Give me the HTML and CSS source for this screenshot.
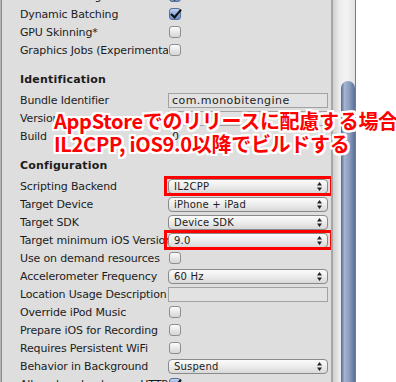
FILE: index.html
```html
<!DOCTYPE html>
<html lang="ja">
<head>
	<meta charset="UTF-8">
	<title>Player Settings - iOS</title>
	<link rel="stylesheet" href="styles.css">
</head>
<body>
	<div class="window">
		<div class="inspector">
			<div class="rows">
				<div class="row"><span class="label">Static Batching</span><span class="check on"></span></div>
				<div class="row"><span class="label">Dynamic Batching</span><span class="check on"></span></div>
				<div class="row"><span class="label">GPU Skinning*</span><span class="check"></span></div>
				<div class="row"><span class="label">Graphics Jobs (Experimental)</span><span class="check"></span></div>

				<div class="section">Identification</div>
				<div class="row"><span class="label">Bundle Identifier</span><span class="field">com.monobitengine</span></div>
				<div class="row"><span class="label">Version*</span><span class="field"></span></div>
				<div class="row"><span class="label">Build</span><span class="field plain">0</span></div>

				<div class="section">Configuration</div>
				<div class="row"><span class="label">Scripting Backend</span><span class="popup marked">IL2CPP<svg class="arrows" width="5" height="9" viewBox="0 0 5 9"><path d="M2.5 0L5 3.5H0zM2.5 9L5 5.5H0z"/></svg></span></div>
				<div class="row"><span class="label">Target Device</span><span class="popup">iPhone + iPad<svg class="arrows" width="5" height="9" viewBox="0 0 5 9"><path d="M2.5 0L5 3.5H0zM2.5 9L5 5.5H0z"/></svg></span></div>
				<div class="row"><span class="label">Target SDK</span><span class="popup">Device SDK<svg class="arrows" width="5" height="9" viewBox="0 0 5 9"><path d="M2.5 0L5 3.5H0zM2.5 9L5 5.5H0z"/></svg></span></div>
				<div class="row"><span class="label">Target minimum iOS Version</span><span class="popup marked">9.0<svg class="arrows" width="5" height="9" viewBox="0 0 5 9"><path d="M2.5 0L5 3.5H0zM2.5 9L5 5.5H0z"/></svg></span></div>
				<div class="row"><span class="label">Use on demand resources</span><span class="check"></span></div>
				<div class="row"><span class="label">Accelerometer Frequency</span><span class="popup">60 Hz<svg class="arrows" width="5" height="9" viewBox="0 0 5 9"><path d="M2.5 0L5 3.5H0zM2.5 9L5 5.5H0z"/></svg></span></div>
				<div class="row"><span class="label">Location Usage Description</span><span class="field"></span></div>
				<div class="row"><span class="label">Override iPod Music</span><span class="check"></span></div>
				<div class="row"><span class="label">Prepare iOS for Recording</span><span class="check"></span></div>
				<div class="row"><span class="label">Requires Persistent WiFi</span><span class="check"></span></div>
				<div class="row"><span class="label">Behavior in Background</span><span class="popup">Suspend<svg class="arrows" width="5" height="9" viewBox="0 0 5 9"><path d="M2.5 0L5 3.5H0zM2.5 9L5 5.5H0z"/></svg></span></div>
				<div class="row"><span class="label">Allow downloads over HTTP</span><span class="check on"></span></div>
			</div>
		</div>
		<div class="scrollbar"><div class="thumb"></div></div>
	</div>

	<div class="note">
		<div>AppStoreでのリリースに配慮する場合</div>
		<div>IL2CPP, iOS9.0以降でビルドする</div>
	</div>
</body>
</html>
```

FILE: styles.css
```css
body{
	margin: 0;
	background-color: #fff;
	font-family: "DejaVu Sans", sans-serif;
	font-size: 11px;
	color: #1c1c1c;
	overflow: hidden;
}
.window{
	display: flex;
	height: 382px;
	overflow: hidden;
}
.inspector{
	width: 330px;
	background-color: #dedede;
	border-left: 1px solid #b4b4b4;
	box-shadow: inset 1px 0 0 #8c8c8c;
	border-right: 2px solid #a6a6a6;
	overflow: hidden;
}
.rows{
	margin-top: -13px;
}
.row{
	display: flex;
	align-items: center;
	height: 18px;
	padding-left: 19px;
}
.label{
	width: 148px;
	flex-shrink: 0;
	white-space: nowrap;
	overflow: hidden;
	letter-spacing: -0.15px;
}
.section{
	height: 18px;
	line-height: 18px;
	margin-top: 12px;
	margin-bottom: 2px;
	padding-left: 19px;
	font-weight: bold;
	letter-spacing: 0.2px;
}

/* controls */
.check{
	width: 12px;
	height: 12px;
	margin-left: 1px;
	box-sizing: border-box;
	border: 1px solid #8e8e8e;
	border-radius: 3px;
	background: linear-gradient(#fdfdfd, #e4e4e4 60%, #d6d6d6);
	position: relative;
}
.check.on{
	border-color: #56729f;
	background: linear-gradient(#c4d4ee, #8aa6d6 55%, #6f8fc6);
}
.check.on::after{
	content: "";
	position: absolute;
	left: 3px;
	top: -2px;
	width: 4px;
	height: 9px;
	border-right: 2px solid #111;
	border-bottom: 2px solid #111;
	transform: rotate(40deg);
}
.field{
	width: 160px;
	height: 15px;
	box-sizing: border-box;
	border: 1px solid #a2a2a2;
	background-color: #e2e2e2;
	padding-left: 3px;
	line-height: 13px;
	white-space: nowrap;
	letter-spacing: 0.45px;
}
.field.plain{
	border-color: transparent;
	background-color: transparent;
}
.popup{
	position: relative;
	width: 160px;
	height: 15px;
	box-sizing: border-box;
	border: 1px solid #8a8a8a;
	border-radius: 4px;
	background: linear-gradient(#fbfbfb, #ececec 50%, #d8d8d8);
	padding-left: 5px;
	font-size: 10px;
	line-height: 13px;
	letter-spacing: 0.2px;
}
.arrows{
	position: absolute;
	right: 5px;
	top: 2px;
	fill: #222;
}
.marked::after{
	content: "";
	position: absolute;
	left: -5px;
	top: -4px;
	right: -6px;
	bottom: -3px;
	border: 3px solid #f00;
}

/* scrollbar */
.scrollbar{
	width: 22px;
	border-right: 1px solid #7d7d7d;
	background: linear-gradient(to right, #cfcfcf, #ececec 30%, #f4f4f4 60%, #e2e2e2);
}
.thumb{
	margin: 81px 0 0 8px;
	height: 320px;
	border-radius: 7px 7px 0 0;
	background: linear-gradient(to right, #51688f, #a4b4d1 25%, #8a9dc0 60%, #5a6f97);
}

/* annotation over the panel */
.note{
	position: absolute;
	left: 54px;
	top: 109px;
	font-family: "Noto Sans CJK JP", sans-serif;
	font-weight: bold;
	font-size: 20px;
	line-height: 23px;
	letter-spacing: -0.3px;
	color: #f00;
	white-space: nowrap;
	text-shadow:
		2px 0 0 #fff, -2px 0 0 #fff, 0 2px 0 #fff, 0 -2px 0 #fff,
		2px 2px 0 #fff, -2px 2px 0 #fff, 2px -2px 0 #fff, -2px -2px 0 #fff,
		1px 2px 0 #fff, -1px 2px 0 #fff, 1px -2px 0 #fff, -1px -2px 0 #fff,
		2px 1px 0 #fff, -2px 1px 0 #fff, 2px -1px 0 #fff, -2px -1px 0 #fff;
}
```
